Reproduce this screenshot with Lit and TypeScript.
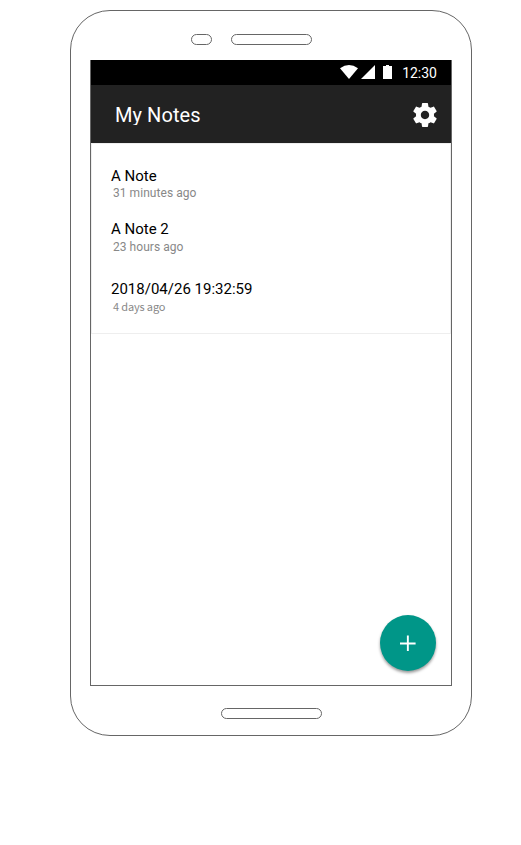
import { LitElement, html, css } from "lit";
import { customElement } from "lit/decorators.js";

@customElement("app-root")
export class AppRoot extends LitElement {
  static styles = css`
    :host {
      display: block;
      height: 845px;
      overflow: hidden;
      background: #fff;
      font-family: Roboto, sans-serif;
      color: #000;
    }
    * {
      box-sizing: border-box;
    }
    svg {
      display: block;
    }
    .phone {
      width: 402px;
      height: 726px;
      margin: 10px 0 0 70px;
      border: 1px solid #666;
      border-radius: 40px;
      display: flex;
      flex-direction: column;
      align-items: center;
    }
    .speaker {
      height: 49px;
      width: 100%;
      display: flex;
      gap: 19px;
      padding: 23px 0 0 119.5px;
    }
    .pill {
      height: 11px;
      border: 1px solid #666;
      border-radius: 5.5px;
    }
    .camera {
      width: 21px;
    }
    .ear {
      width: 81px;
    }
    .home {
      width: 101px;
      margin-top: 22px;
    }
    .screen {
      width: 362px;
      height: 626px;
      border: 1px solid #666;
      border-top: 0;
      display: flex;
      flex-direction: column;
    }
    .status {
      height: 25px;
      background: #000;
      color: #fff;
      display: flex;
      align-items: flex-start;
      justify-content: flex-end;
      padding: 4px 14px 0 0;
    }
    .clock {
      font-size: 14px;
      line-height: 18px;
      margin-left: 9px;
    }
    .bar {
      height: 58px;
      background: #222;
      color: #fff;
      display: flex;
      align-items: flex-start;
      justify-content: space-between;
      padding: 17px 14px 0 24px;
    }
    .gear {
      margin-top: 1px;
    }
    .title {
      font-size: 20px;
      line-height: 26px;
      height: 23px;
      overflow: hidden;
      letter-spacing: 0.08px;
    }
    .notes {
      height: 191px;
      border: 1px solid #eee;
      padding: 23px 0 0 19px;
    }
    .note {
      height: 53px;
    }
    .note:nth-child(2) {
      height: 60px;
    }
    .note:nth-child(2) .when {
      padding-top: 1px;
    }
    .name {
      font-size: 15px;
      line-height: 18px;
    }
    .when {
      font-size: 12px;
      line-height: 16px;
      padding-left: 2px;
      letter-spacing: 0.05px;
      color: #888;
    }
    .small {
      font-family: "Noto Sans CJK SC", sans-serif;
      font-size: 11px;
      line-height: 17px;
      letter-spacing: -0.15px;
    }
    .fab {
      width: 56px;
      height: 56px;
      margin: auto 15px 14px auto;
      border-radius: 50%;
      background: #009688;
      box-shadow: 0 2px 3px rgba(0, 0, 0, 0.4);
      display: grid;
      place-items: center;
    }
  `;

  private notes = [
    { name: "A Note", when: "31 minutes ago", cls: "when" },
    { name: "A Note 2", when: "23 hours ago", cls: "when" },
    { name: "2018/04/26 19:32:59", when: "4 days ago", cls: "when small" },
  ];

  render() {
    return html`
      <div class="phone">
        <div class="speaker">
          <div class="pill camera"></div>
          <div class="pill ear"></div>
        </div>
        <div class="screen">
          <div class="status">
            <svg width="54" height="16" viewBox="0 0 54 16" fill="#fff">
              <path d="M1 4.3Q10 -2.3 19 4.3L10 15Z" />
              <path d="M36 1V15H22Z" />
              <path d="M44 2H47V1H50V2H53V15H44Z" />
            </svg>
            <div class="clock">12:30</div>
          </div>
          <div class="bar">
            <div class="title">My Notes</div>
            <svg class="gear" width="24" height="24" viewBox="2 2 20 20" fill="#fff">
              <path
                d="M19.43 12.98c.04-.32.07-.64.07-.98s-.03-.66-.07-.98l2.11-1.65c.19-.15.24-.42.12-.64l-2-3.46c-.12-.22-.39-.3-.61-.22l-2.49 1c-.52-.4-1.08-.73-1.69-.98l-.38-2.65C14.46 2.18 14.25 2 14 2h-4c-.25 0-.46.18-.49.42l-.38 2.65c-.61.25-1.17.59-1.69.98l-2.49-1c-.23-.09-.49 0-.61.22l-2 3.46c-.13.22-.07.49.12.64l2.11 1.65c-.04.32-.07.65-.07.98s.03.66.07.98l-2.11 1.65c-.19.15-.24.42-.12.64l2 3.46c.12.22.39.3.61.22l2.49-1c.52.4 1.08.73 1.69.98l.38 2.65c.03.24.24.42.49.42h4c.25 0 .46-.18.49-.42l.38-2.65c.61-.25 1.17-.59 1.69-.98l2.49 1c.23.09.49 0 .61-.22l2-3.46c.12-.22.07-.49-.12-.64l-2.11-1.65zM12 15.5c-1.93 0-3.5-1.57-3.5-3.5s1.57-3.5 3.5-3.5 3.5 1.57 3.5 3.5-1.57 3.5-3.5 3.5z"
              />
            </svg>
          </div>
          <div class="notes">
            ${this.notes.map(
              (n) => html`<div class="note">
                <div class="name">${n.name}</div>
                <div class=${n.cls}>${n.when}</div>
              </div>`
            )}
          </div>
          <div class="fab">
            <svg width="16" height="16" viewBox="0 0 16 16" fill="#fff">
              <path d="M6.9 .6H8.8V7.6H15.6V9.4H8.8V16H6.9V9.4H0V7.6H6.9Z" />
            </svg>
          </div>
        </div>
        <div class="pill home"></div>
      </div>
    `;
  }
}
